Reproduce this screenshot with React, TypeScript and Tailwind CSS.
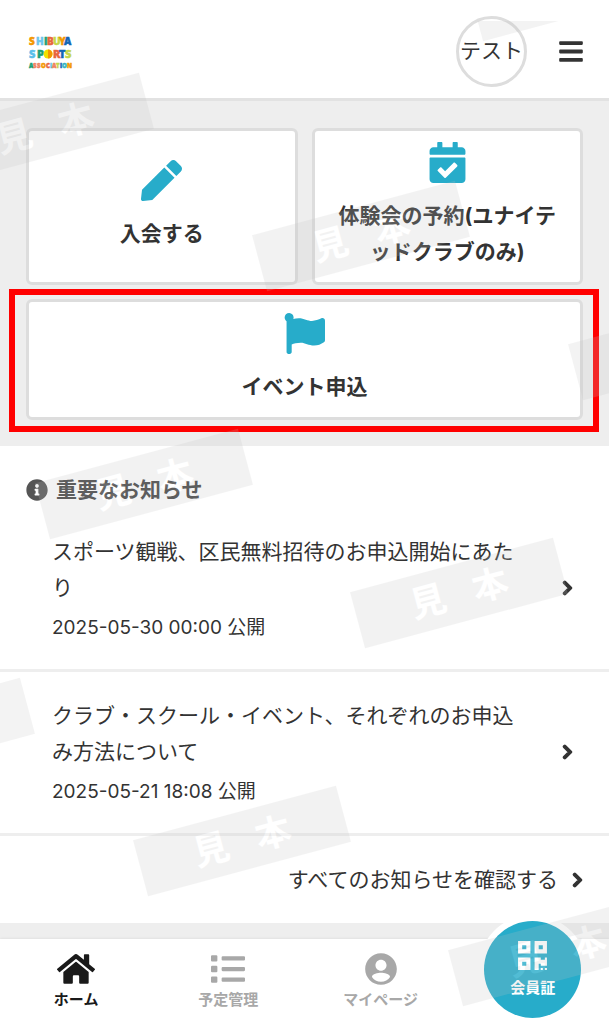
import type { ReactNode } from "react";
import {
  FaBars,
  FaCalendarCheck,
  FaChevronRight,
  FaFlag,
  FaHome,
  FaInfoCircle,
  FaList,
  FaPen,
  FaQrcode,
} from "react-icons/fa";

const notices = [
  { title: "スポーツ観戦、区民無料招待のお申込開始にあたり", date: "2025-05-30 00:00 公開" },
  { title: "クラブ・スクール・イベント、それぞれのお申込み方法について", date: "2025-05-21 18:08 公開" },
];

// centre points of the sample stamps
const stamps = [
  { x: 45, y: 128, label: true },
  { x: 361, y: 236, label: true },
  { x: 677, y: 345, label: false },
  { x: 144, y: 484, label: true },
  { x: 459, y: 593, label: true },
  { x: -74, y: 733, label: false },
  { x: 242, y: 841, label: true },
  { x: 557, y: 951, label: true },
];

type Letter = [char: string, x: number, color: string];

const logoRows: { y: number; size: number; letters: Letter[] }[] = [
  {
    y: 10,
    size: 10,
    letters: [
      ["S", 1, "#f39800"],
      ["H", 8, "#6cc6ec"],
      ["I", 16, "#1aa078"],
      ["B", 19, "#e8663c"],
      ["U", 25, "#c5d64a"],
      ["Y", 31, "#f39800"],
      ["A", 36, "#1465b4"],
    ],
  },
  {
    y: 23,
    size: 11,
    letters: [
      ["S", 1, "#5bbfea"],
      ["P", 9, "#1aa078"],
      ["R", 25, "#e8663c"],
      ["T", 31, "#1465b4"],
      ["S", 37, "#c5d64a"],
    ],
  },
  {
    y: 33,
    size: 6,
    letters: [
      ["A", 1, "#1aa078"],
      ["S", 5, "#f08060"],
      ["S", 9, "#f08060"],
      ["O", 13, "#f39800"],
      ["C", 18, "#e8663c"],
      ["I", 22, "#6cc6ec"],
      ["A", 24, "#f08060"],
      ["T", 28, "#c5d64a"],
      ["I", 32, "#1465b4"],
      ["O", 34, "#35b3c4"],
      ["N", 39, "#f39800"],
    ],
  },
];

function Logo() {
  return (
    <svg
      className="h-9 w-11 overflow-visible font-['Open_Sans',sans-serif]"
      viewBox="0 0 44 36"
      role="img"
      aria-label="Shibuya Sports Association"
    >
      {logoRows.map((row) =>
        row.letters.map(([char, x, color]) => (
          <text
            key={`${row.y}-${x}`}
            x={x}
            y={row.y}
            fontSize={row.size}
            fontWeight={800}
            fill={color}
            stroke={color}
            strokeWidth={0.5}
          >
            {char}
          </text>
        ))
      )}
      <circle cx="20" cy="19" r="4.500" fill="#f2e100" />
      <path d="M20 14.500a4.500 4.500 0 0 1 0 9z" fill="#f39800" />
    </svg>
  );
}

function Chevron() {
  return <FaChevronRight className="h-4 w-[11px] shrink-0 overflow-visible stroke-current stroke-[45]" />;
}

function MenuCard({ icon, label }: { icon: ReactNode; label: string }) {
  return (
    <a
      href="#"
      className="flex flex-col items-center justify-center gap-[15px] rounded-md border-[3px] border-[#ddd] bg-white px-4 pt-[11px] pb-3 text-center font-bold text-[#333]"
    >
      <span className="text-[41px] text-[#27acca]">{icon}</span>
      <span className="leading-9">{label}</span>
    </a>
  );
}

function AccountIcon() {
  return (
    <svg className="size-[38px]" viewBox="0 0 24 24" fill="currentColor" aria-hidden="true">
      <path d="M12 2C6.480 2 2 6.480 2 12s4.480 10 10 10 10-4.480 10-10S17.520 2 12 2zm0 4.100c1.930 0 3.500 1.570 3.500 3.500S13.930 13.100 12 13.100s-3.500-1.570-3.500-3.500S10.070 6.100 12 6.100zm0 13.900c-2.400 0-4.600-1.200-5.700-3 0-1.900 3.800-2.600 5.700-2.600s5.700.7 5.700 2.600c-1.100 1.800-3.300 3-5.700 3z" />
    </svg>
  );
}

function NavItem({ icon, label, active }: { icon: ReactNode; label: string; active?: boolean }) {
  return (
    <a
      href="#"
      className={`flex flex-col items-center pt-[11px] text-[15px] leading-6 font-bold ${active ? "text-[#1a1a1a]" : "text-[#a8a8a8]"}`}
    >
      <span className="flex h-[38px] items-center">{icon}</span>
      {label}
    </a>
  );
}

function Stamp({ x, y, label }: { x: number; y: number; label: boolean }) {
  return (
    <div
      className="absolute -mt-[29px] -ml-[105px] flex h-[58px] w-[210px] rotate-[-15deg] items-center justify-center gap-7 bg-[#c3c3c3] text-4xl font-bold text-white opacity-20"
      style={{ left: x, top: y }}
    >
      {label && (
        <>
          <span>見</span>
          <span>本</span>
        </>
      )}
    </div>
  );
}

export default function App() {
  return (
    <div className="relative flex min-h-screen flex-col overflow-hidden bg-white font-['Inter','Noto_Sans_CJK_JP',sans-serif] text-[21px] text-[#333]">
      <header className="flex h-[101px] items-center justify-between border-b-[3px] border-[#e2e2e2] pt-1 pr-[26px] pl-7">
        <a href="#" className="pt-1">
          <Logo />
        </a>
        <div className="flex items-center gap-8">
          <a
            href="#"
            className="flex size-[71px] items-center justify-center rounded-full border-[3px] border-[#ddd] whitespace-nowrap"
          >
            テスト
          </a>
          <button aria-label="メニュー">
            <FaBars className="h-[27px] w-6" />
          </button>
        </div>
      </header>

      <section className="grid grid-cols-2 gap-[14px] bg-[#eee] px-[26px] pt-[27px] pb-[26px]">
        <MenuCard icon={<FaPen />} label="入会する" />
        <MenuCard icon={<FaCalendarCheck />} label="体験会の予約(ユナイテッドクラブのみ)" />
        <div className="relative col-span-2">
          <MenuCard icon={<FaFlag />} label="イベント申込" />
          <div className="pointer-events-none absolute -top-[10px] -right-4 -bottom-3 -left-[17px] border-[6px] border-[#f00]" />
        </div>
      </section>

      <section>
        <h2 className="flex items-center gap-2 px-[26px] pt-[26px] leading-9 font-bold text-[#444]">
          <FaInfoCircle className="size-[22px] text-[#555]" />
          重要なお知らせ
        </h2>
        <ul>
          {notices.map((notice) => (
            <li key={notice.date} className="border-b-[3px] border-[#eee]">
              <a href="#" className="flex items-center justify-between gap-7 pt-[26px] pr-9 pb-[27px] pl-[52px]">
                <span>
                  <span className="block leading-9">{notice.title}</span>
                  <span className="mt-2 block text-[19px] leading-7">{notice.date}</span>
                </span>
                <Chevron />
              </a>
            </li>
          ))}
        </ul>
        <a href="#" className="flex h-[87px] items-center justify-end gap-[14px] pr-[26px]">
          すべてのお知らせを確認する
          <Chevron />
        </a>
      </section>

      <div className="h-4 grow bg-[#eee]" />

      <nav className="relative grid h-[85px] grid-cols-4 bg-white shadow-[0_0_3px_rgba(0,0,0,0.1)]">
        <NavItem icon={<FaHome className="h-[34px] w-[38px]" />} label="ホーム" active />
        <NavItem icon={<FaList className="size-[34px]" />} label="予定管理" />
        <NavItem icon={<AccountIcon />} label="マイページ" />
        <div className="relative flex justify-center">
          <a
            href="#"
            className="absolute -top-[18px] flex size-[97px] flex-col items-center rounded-full bg-[#27acca] pt-[18px] text-[15px] leading-6 font-bold text-white ring-[6px] ring-white"
          >
            <FaQrcode className="mb-1 size-[33px]" />
            会員証
          </a>
        </div>
      </nav>

      <div className="pointer-events-none absolute inset-0 overflow-hidden" aria-hidden="true">
        <div className="absolute inset-x-0 top-[21px] h-20 overflow-hidden">
          <Stamp x={577} y={-35} label={false} />
        </div>
        {stamps.map((stamp) => (
          <Stamp key={`${stamp.x}-${stamp.y}`} {...stamp} />
        ))}
      </div>
    </div>
  );
}
